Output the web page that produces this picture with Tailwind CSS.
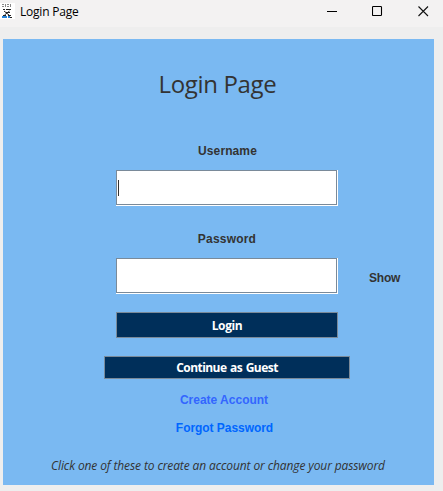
<!DOCTYPE html>
<html lang="en">
<head>
<meta charset="utf-8">
<title>Login Page</title>
<script src="https://cdn.jsdelivr.net/npm/@tailwindcss/browser@4"></script>
</head>
<body class="w-[443px] h-[491px] overflow-hidden bg-[#eeeeee] text-[#333333] font-['Liberation_Sans',Arial,sans-serif]">
<header class="flex h-[27px] items-start justify-between bg-[#f3f2f2]">
  <div class="flex items-start">
    <svg class="mt-[3px] h-4 w-[15px]" viewBox="0 0 15 16" fill="none">
      <path fill="#fff" d="M0 0h15v16H0z"/>
      <path stroke="#888" d="M2 1.500h2M5.500 1v3M7 1.500h2M10.500 1v3M2 3.500h2M7 3.500h2"/>
      <path stroke="#222" d="M3 6.500h2M6 6.500h5M4 8l5 4M9.500 8l-5 4M3 12.500h3M8 12.500h3M6 9.500h4"/>
      <path stroke="#2583d8" stroke-width="2" d="M2 14h5M8 14h2"/>
      <path stroke="#222" d="M10 14.500h2"/>
    </svg>
    <span class="ml-[5px] mt-1 whitespace-nowrap font-['Open_Sans',sans-serif] text-[12px] leading-4 tracking-[-0.22px] text-black">Login Page</span>
  </div>
  <div class="mr-[14px] mt-[5px] flex gap-[35px]">
    <svg class="h-3 w-[11px]" viewBox="0 0 11 12"><path stroke="#000" d="M1 6.500h10"/></svg>
    <svg class="h-3 w-[11px]" viewBox="0 0 11 12" fill="none"><rect x=".5" y="1.500" width="9" height="9" rx=".8" stroke="#000" stroke-width="1.100"/></svg>
    <svg class="h-3 w-[11px]" viewBox="0 0 11 12"><path stroke="#111" stroke-width="1.100" d="M.5 1.500l9.500 9.500M10 1.500L.5 11"/></svg>
  </div>
</header>
<main class="ml-[3px] mt-3 flex h-[446px] w-[431px] flex-col items-center bg-[#7ab9f2] pl-[17px]">
  <h1 class="mr-[19px] mt-[29px] h-8 whitespace-nowrap font-['Open_Sans',sans-serif] text-[24px] leading-8 tracking-[-0.35px]">Login Page</h1>
  <label for="user" class="mt-1 flex h-[66px] items-end pb-[12px] pl-px text-[12px] font-bold leading-[14px] tracking-[0.1px]">Username</label>
  <div class="h-9 w-[222px] border-b border-r border-white">
    <div id="user" class="flex h-[35px] w-[221px] items-center border border-[#7a8a99] bg-white pl-px"><span class="h-4 w-px bg-[#333]"></span></div>
  </div>
  <label for="pass" class="flex h-[52px] items-end pb-[12px] text-[12px] font-bold leading-[14px] tracking-[0.2px]">Password</label>
  <div class="flex w-full items-center">
    <div class="ml-24 h-9 w-[222px] border-b border-r border-white">
      <div id="pass" class="h-[35px] w-[221px] border border-[#7a8a99] bg-white"></div>
    </div>
    <span class="ml-[31px] mt-1 text-[12px] font-bold leading-[14px] tracking-[-0.2px]">Show</span>
  </div>
  <button class="mt-[18px] h-[26px] w-[222px] border border-[#7a8a99] bg-[#002f5a] pt-[2px] font-['Open_Sans',sans-serif] text-[12px] font-bold leading-4 tracking-[-0.4px] text-white">Login</button>
  <button class="mt-[18px] h-[23px] w-[246px] border border-[#7a8a99] bg-[#002f5a] pt-px font-['Open_Sans',sans-serif] text-[12px] font-bold leading-4 tracking-[-0.55px] text-white [word-spacing:1px]">Continue as Guest</button>
  <a class="mr-[6px] mt-[14px] text-[12px] font-bold leading-[14px] text-[#3366ff]">Create Account</a>
  <a class="mr-[5px] mt-[14px] text-[12px] font-bold leading-[14px] tracking-[-0.05px] text-[#0066ff]">Forgot Password</a>
  <p class="mr-[18px] mt-[23px] whitespace-nowrap font-['Open_Sans',sans-serif] text-[12px] italic leading-4 tracking-[-0.115px]">Click one of these to create an account or change your password</p>
</main>
</body>
</html>
